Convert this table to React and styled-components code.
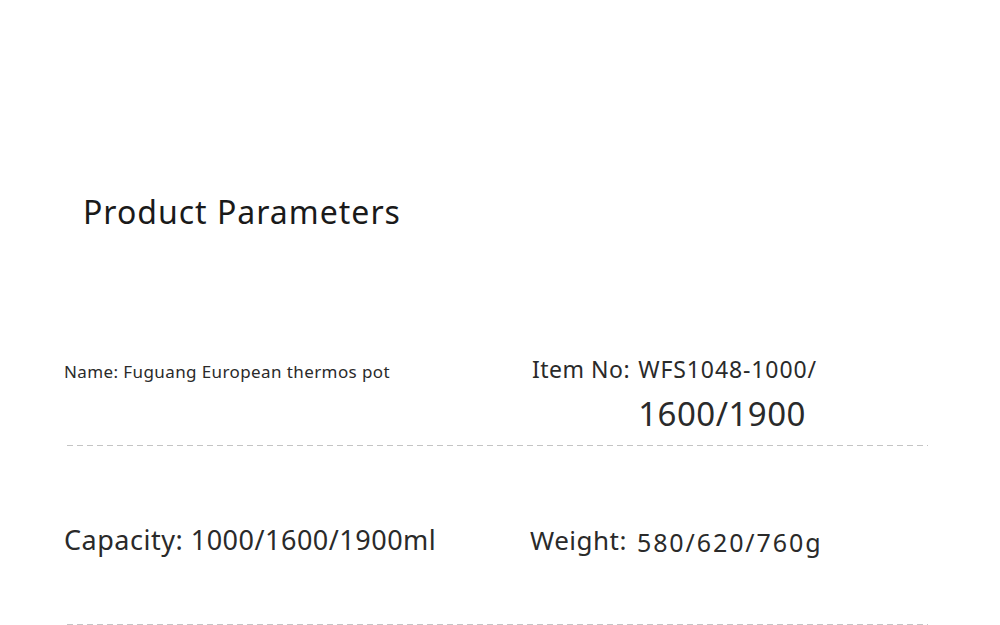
import React from 'react';
import styled, { createGlobalStyle } from 'styled-components';

const GlobalStyle = createGlobalStyle`
  html, body {
    margin: 0;
    padding: 0;
    background: #fff;
  }
  body {
    font-family: "Noto Sans", "Open Sans", sans-serif;
    color: #222;
  }
`;

const params = [
  {
    left: { label: 'Name:', value: 'Fuguang European thermos pot', size: 17, spacing: 0.4 },
    right: {
      label: 'Item No:', value: 'WFS1048-1000/', extra: '1600/1900',
      labelSize: 23, size: 23, spacing: 0.9, indent: 2, drop: 0, gap: 8,
    },
    top: 0,
    height: 92,
  },
  {
    left: { label: 'Capacity:', value: '1000/1600/1900ml', size: 27, spacing: 0.5 },
    right: {
      label: 'Weight:', value: '580/620/760g',
      labelSize: 26, size: 25, spacing: 1.9, indent: 0, drop: 2, gap: 10,
    },
    top: 75,
    height: 103,
  },
];

const App = () => {
  return (
    <>
      <GlobalStyle />
      <Page>
        <Title>Product Parameters</Title>
        <Table>
          {params.map((row, index) => (
            <Row key={index} $top={row.top}>
              <Cells $height={row.height}>
                <Cell $size={row.left.size} $spacing={row.left.spacing}>
                  {row.left.label} {row.left.value}
                </Cell>
                <Cell
                  $size={row.right.size}
                  $spacing={row.right.spacing}
                  $indent={row.right.indent}
                  $gap={row.right.gap}
                >
                  <Label $size={row.right.labelSize}>{row.right.label}</Label>
                  <Values $drop={row.right.drop}>
                    <span>{row.right.value}</span>
                    {row.right.extra && <Extra>{row.right.extra}</Extra>}
                  </Values>
                </Cell>
              </Cells>
              <Dashed />
            </Row>
          ))}
        </Table>
      </Page>
    </>
  );
};

const Page = styled.div`
  width: 1000px;
  height: 625px;
  overflow: hidden;
  padding-top: 190px;
  box-sizing: border-box;
`;

const Title = styled.h1`
  margin: 0 0 0 83px;
  font-size: 32px;
  font-weight: 400;
  letter-spacing: 1px;
  color: #1a1a1a;
`;

const Table = styled.div`
  margin-top: 120px;
  padding: 0 72px 0 64px;
`;

const Row = styled.div`
  display: flex;
  flex-direction: column;
  padding-top: ${(p) => p.$top}px;
`;

const Cells = styled.div`
  display: grid;
  grid-template-columns: 466px 1fr;
  align-items: baseline;
  min-height: ${(p) => p.$height}px;
`;

const Cell = styled.div`
  display: flex;
  align-items: baseline;
  gap: ${(p) => p.$gap || 8}px;
  padding-left: ${(p) => p.$indent || 0}px;
  font-size: ${(p) => p.$size}px;
  letter-spacing: ${(p) => p.$spacing}px;
  color: #2a2a2a;
`;

const Label = styled.span`
  font-size: ${(p) => p.$size}px;
  letter-spacing: 0.5px;
`;

const Values = styled.div`
  display: flex;
  flex-direction: column;
  position: relative;
  top: ${(p) => p.$drop}px;
`;

const Extra = styled.span`
  margin-top: 6px;
  font-size: 33px;
  letter-spacing: 0.5px;
`;

const Dashed = styled.div`
  margin-left: 3px;
  height: 1px;
  background-image: linear-gradient(to right, #c4c4c4 0 6px, transparent 6px 10px);
  background-size: 10px 1px;
`;

export default App;
